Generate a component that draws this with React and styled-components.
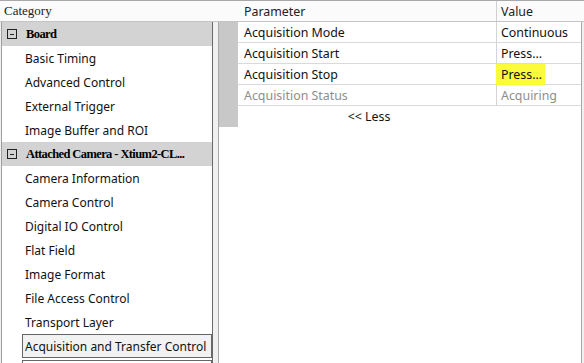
import React from 'react'
import styled, { createGlobalStyle } from 'styled-components'

const GlobalStyle = createGlobalStyle`
  html, body {
    margin: 0;
    padding: 0;
    background: #f0f0f0;
  }
`

const Window = styled.div`
  width: 584px;
  height: 363px;
  overflow: hidden;
  background: #f0f0f0;
  display: flex;
  flex-direction: column;
  font-family: 'Noto Sans', 'Open Sans', sans-serif;
  font-size: 12px;
  color: #111;
`

const HeaderBar = styled.div`
  display: grid;
  grid-template-columns: 238px 258px 1fr;
  height: 20px;
  border-top: 1px solid #a8a8a8;
  border-bottom: 1px solid #c4c4c4;
  background: #fbfbfb;
`

const HeadCell = styled.div`
  display: flex;
  align-items: center;
  padding-left: ${(p) => p.$pad}px;
  border-left: ${(p) => (p.$divider ? '1px solid #d0d0d0' : 'none')};
  font-family: ${(p) => (p.$serif ? "'Liberation Serif', serif" : 'inherit')};
  font-size: ${(p) => (p.$serif ? '13px' : '12.4px')};
  color: #222;
`

const Body = styled.div`
  flex: 1;
  display: flex;
  gap: 5px;
  min-height: 0;
`

const CategoryList = styled.div`
  width: 210px;
  margin-left: 1px;
  border-left: 1px solid #a0a0a0;
  border-right: 1px solid #6a6a6a;
  background: #fff;
  display: flex;
  flex-direction: column;
  overflow: hidden;
`

const SectionRow = styled.div`
  height: 24px;
  flex: none;
  display: flex;
  align-items: center;
  gap: 9px;
  padding-left: 5px;
  background: #d3d3d3;
  font-family: 'Liberation Serif', serif;
  font-weight: bold;
  font-size: 12.5px;
  letter-spacing: -0.6px;
  color: #000;
  white-space: nowrap;
`

const Collapse = styled.span`
  position: relative;
  width: 8px;
  height: 8px;
  border: 1px solid #222;
  flex: none;

  &::after {
    content: '';
    position: absolute;
    left: 2px;
    right: 2px;
    top: 3.5px;
    height: 1px;
    background: #222;
  }
`

const Item = styled.div`
  height: ${(p) => (p.$selected ? '22px' : '24px')};
  flex: none;
  display: flex;
  align-items: center;
  margin-left: ${(p) => (p.$selected || p.$boxed ? '20px' : '0')};
  padding-left: ${(p) => (p.$selected || p.$boxed ? '2px' : '23px')};
  border: ${(p) => (p.$selected || p.$boxed ? '1px solid #666' : 'none')};
  margin-bottom: ${(p) => (p.$selected ? '2px' : '0')};
  background: ${(p) => (p.$selected ? '#f2f2f2' : 'transparent')};
  white-space: nowrap;
`

const ParamPanel = styled.div`
  width: 362px;
  border-left: 1px solid #a8a8a8;
  border-right: 1px solid #a8a8a8;
  background: #fff;
  display: grid;
  grid-template-columns: 19px 258px 1fr;
  grid-auto-rows: 21px;
  align-content: start;
  font-size: 12.4px;
`

const Gutter = styled.div`
  grid-column: 1;
  grid-row: 1 / span 5;
  background: #c8c8c8;
`

const Cell = styled.div`
  display: flex;
  align-items: center;
  padding-left: ${(p) => p.$pad}px;
  border-bottom: 1px solid #dadada;
  border-left: ${(p) => (p.$divider ? '1px solid #d4d4d4' : 'none')};
  color: ${(p) => (p.$muted ? '#8e8e8e' : '#111')};
  white-space: nowrap;
`

const Highlight = styled.span`
  background: #fbfb3c;
  margin-left: -5px;
  padding: 2px 3px 2px 5px;
`

const LessRow = styled.div`
  grid-column: 2;
  display: flex;
  align-items: center;
  justify-content: center;
  padding-left: 4px;
`

const children1 = ['Basic Timing', 'Advanced Control', 'External Trigger', 'Image Buffer and ROI']
const children2 = [
  'Camera Information',
  'Camera Control',
  'Digital IO Control',
  'Flat Field',
  'Image Format',
  'File Access Control',
  'Transport Layer',
]

const params = [
  { name: 'Acquisition Mode', value: 'Continuous' },
  { name: 'Acquisition Start', value: 'Press...' },
  { name: 'Acquisition Stop', value: 'Press...', marked: true },
  { name: 'Acquisition Status', value: 'Acquiring', muted: true },
]

export default function App() {
  return (
    <>
      <GlobalStyle />
      <Window>
        <HeaderBar>
          <HeadCell $pad={4} $serif>Category</HeadCell>
          <HeadCell $pad={6}>Parameter</HeadCell>
          <HeadCell $pad={4} $divider>Value</HeadCell>
        </HeaderBar>
        <Body>
          <CategoryList>
            <SectionRow>
              <Collapse />
              Board
            </SectionRow>
            {children1.map((c) => (
              <Item key={c}>{c}</Item>
            ))}
            <SectionRow>
              <Collapse />
              Attached Camera - Xtium2-CL...
            </SectionRow>
            {children2.map((c) => (
              <Item key={c}>{c}</Item>
            ))}
            <Item $selected>Acquisition and Transfer Control</Item>
            <Item $boxed />
          </CategoryList>
          <ParamPanel>
            <Gutter />
            {params.map((p) => (
              <React.Fragment key={p.name}>
                <Cell $pad={6} $muted={p.muted}>{p.name}</Cell>
                <Cell $pad={4} $divider $muted={p.muted}>
                  {p.marked ? <Highlight>{p.value}</Highlight> : p.value}
                </Cell>
              </React.Fragment>
            ))}
            <LessRow>&lt;&lt; Less</LessRow>
          </ParamPanel>
        </Body>
      </Window>
    </>
  )
}
